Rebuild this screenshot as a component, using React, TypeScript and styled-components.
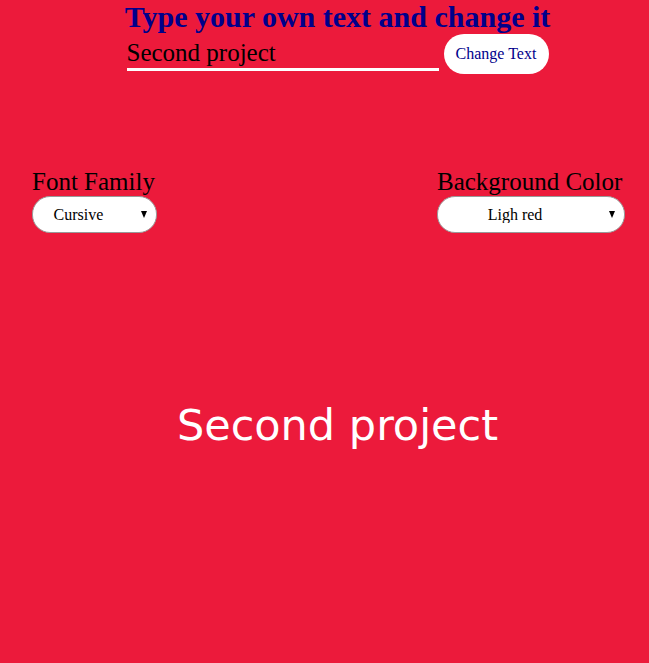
import { useState } from 'react';
import styled, { createGlobalStyle } from 'styled-components';

const GlobalStyle = createGlobalStyle`
  html, body {
    margin: 0;
    padding: 0;
    background: #ec1a3b;
  }
  body {
    font-family: "Liberation Serif", "Times New Roman", serif;
  }
`;

const Page = styled.div`
  min-height: 663px;
  background: #ec1a3b;
  display: flex;
  flex-direction: column;
`;

const Header = styled.header`
  display: flex;
  flex-direction: column;
  align-items: center;
  padding-left: 26px;
`;

const Title = styled.h1`
  margin: 0;
  font-size: 30px;
  line-height: 34px;
  font-weight: bold;
  color: #00008b;
`;

const InputRow = styled.div`
  display: flex;
  align-items: center;
  gap: 5px;
`;

const TextInput = styled.input`
  width: 312px;
  height: 30px;
  padding: 0;
  border: none;
  border-bottom: 3px solid #fff;
  background: transparent;
  outline: none;
  font-family: "Liberation Serif", "Times New Roman", serif;
  font-size: 25px;
  color: #000;
`;

const ChangeButton = styled.button`
  width: 105px;
  height: 40px;
  border: none;
  border-radius: 20px;
  background: #fff;
  color: #00008b;
  font-family: "Liberation Serif", "Times New Roman", serif;
  font-size: 16px;
  cursor: pointer;
`;

const Controls = styled.div`
  display: flex;
  justify-content: space-between;
  align-items: flex-start;
  padding: 94px 24px 0 32px;
`;

const Field = styled.div`
  display: flex;
  flex-direction: column;
  align-items: flex-start;
`;

const Label = styled.label`
  font-size: 25px;
  line-height: 28px;
  color: #000;
`;

const SelectWrap = styled.div`
  position: relative;

  &::after {
    content: '';
    position: absolute;
    right: 10px;
    top: 15px;
    border-left: 3.5px solid transparent;
    border-right: 3.5px solid transparent;
    border-top: 7px solid #000;
    pointer-events: none;
  }
`;

const Select = styled.select<{ $width: number }>`
  appearance: none;
  -webkit-appearance: none;
  display: block;
  width: ${(p) => p.$width}px;
  height: 37px;
  border: 1px solid #999;
  border-radius: 18px;
  background: #fff;
  color: #000;
  font-family: "Liberation Serif", "Times New Roman", serif;
  font-size: 16px;
  text-align: center;
  text-align-last: center;
  padding: 0 32px 0 0;
  outline: none;
`;

const Display = styled.p<{ $font: string }>`
  margin: 167px 0 0;
  padding-left: 26px;
  text-align: center;
  color: #fff;
  font-family: ${(p) => p.$font};
  font-size: 43px;
  line-height: 50px;
`;

const fonts: Record<string, string> = {
  cursive: '"Comic Sans MS", "DejaVu Sans", cursive',
  serif: '"Liberation Serif", serif',
  monospace: '"Liberation Mono", monospace',
};

const colors: Record<string, string> = {
  lightred: '#ec1a3b',
  blue: '#1a4bec',
  green: '#1aa84a',
};

export default function App() {
  const [draft, setDraft] = useState('Second project');
  const [text, setText] = useState('Second project');
  const [font, setFont] = useState('cursive');
  const [bg, setBg] = useState('lightred');

  return (
    <>
      <GlobalStyle />
      <Page style={{ background: colors[bg] }}>
        <Header>
          <Title>Type your own text and change it</Title>
          <InputRow>
            <TextInput value={draft} onChange={(e) => setDraft(e.target.value)} />
            <ChangeButton onClick={() => setText(draft)}>Change Text</ChangeButton>
          </InputRow>
        </Header>

        <Controls>
          <Field>
            <Label htmlFor="font">Font Family</Label>
            <SelectWrap>
              <Select id="font" $width={125} value={font} onChange={(e) => setFont(e.target.value)}>
                <option value="cursive">Cursive</option>
                <option value="serif">Serif</option>
                <option value="monospace">Monospace</option>
              </Select>
            </SelectWrap>
          </Field>
          <Field>
            <Label htmlFor="bg">Background Color</Label>
            <SelectWrap>
              <Select id="bg" $width={188} value={bg} onChange={(e) => setBg(e.target.value)}>
                <option value="lightred">Ligh red</option>
                <option value="blue">Blue</option>
                <option value="green">Green</option>
              </Select>
            </SelectWrap>
          </Field>
        </Controls>

        <Display $font={fonts[font]}>{text}</Display>
      </Page>
    </>
  );
}
